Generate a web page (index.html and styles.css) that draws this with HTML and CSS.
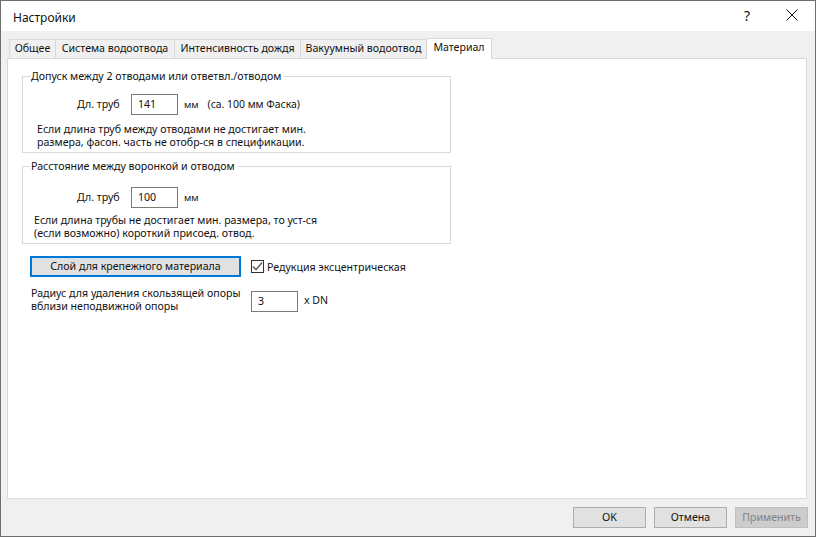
FILE: index.html
```html
<!DOCTYPE html>
<html lang="ru">
<head>
<meta charset="utf-8">
<title>Настройки</title>
<link rel="stylesheet" href="styles.css">
</head>
<body>
<div class="window">
  <header class="titlebar">
    <span class="title">Настройки</span>
    <span class="help">?</span>
    <svg class="close" width="12" height="12" viewBox="0 0 12 12"><path d="M.5.5l11 11M11.500.5l-11 11" stroke="#111" stroke-width="1" fill="none"/></svg>
  </header>
  <main class="body">
    <nav class="tabs">
      <span class="tab t1">Общее</span>
      <span class="tab t2">Система водоотвода</span>
      <span class="tab t3">Интенсивность дождя</span>
      <span class="tab t4">Вакуумный водоотвод</span>
      <span class="tab active">Материал</span>
    </nav>
    <section class="panel">
      <fieldset class="group g1">
        <legend>Допуск между 2 отводами или ответвл./отводом</legend>
        <div class="field">
          <span class="flabel">Дл. труб</span>
          <span class="input">141</span>
          <span class="unit">мм</span>
          <span class="note">(са. 100 мм Фаска)</span>
        </div>
        <p class="desc d1">Если длина труб между отводами не достигает мин.<br>размера, фасон. часть не отобр-ся в спецификации.</p>
      </fieldset>
      <fieldset class="group g2">
        <legend>Расстояние между воронкой и отводом</legend>
        <div class="field">
          <span class="flabel">Дл. труб</span>
          <span class="input">100</span>
          <span class="unit">мм</span>
        </div>
        <p class="desc d2">Если длина трубы не достигает мин. размера, то уст-ся<br>(если возможно) короткий присоед. отвод.</p>
      </fieldset>
      <div class="row-layer">
        <span class="btn layer">Слой для крепежного материала</span>
        <span class="check"><svg width="11" height="11" viewBox="0 0 11 11"><path d="M1 5.500l3 3.200L10 1.500" stroke="#555" stroke-width="1.300" fill="none"/></svg></span>
        <span class="check-label">Редукция эксцентрическая</span>
      </div>
      <div class="row-radius">
        <p class="radius">Радиус для удаления скользящей опоры<br>вблизи неподвижной опоры</p>
        <span class="input">3</span>
        <span class="unit">x DN</span>
      </div>
    </section>
    <footer class="actions">
      <span class="btn act">OK</span>
      <span class="btn act">Отмена</span>
      <span class="btn act disabled">Применить</span>
    </footer>
  </main>
</div>
</body>
</html>
```
FILE: styles.css
```css
* { box-sizing: border-box; }
html, body { margin: 0; height: 100%; }
body { width: 816px; height: 537px; overflow: hidden; background: #fff; font-family: "Noto Sans", "Open Sans", sans-serif; font-size: 10.6px; line-height: 13px; color: #111; }
.window { width: 816px; height: 537px; border: 1px solid #6e6e6e; display: flex; flex-direction: column; background: #f0f0f0; }
.titlebar { height: 30px; flex: none; background: #fff; display: flex; align-items: center; padding: 0 9px 0 12px; }
.title { font-size: 12px; flex: 1; position: relative; top: 1px; }
.help { font-size: 14px; margin-right: 36px; position: relative; top: -1px; }
.close { position: relative; top: -1px; margin-right: 8px; }
.body { flex: 1; display: flex; flex-direction: column; padding: 7px 7px 0 6px; }
.tabs { display: flex; height: 21px; align-items: flex-end; padding-left: 2px; flex: none; margin-bottom: -1px; }
.tab { height: 20px; border: 1px solid #d9d9d9; border-left: 0; border-bottom: 0; background: #f0f0f0; display: flex; align-items: center; justify-content: center; white-space: nowrap; padding-bottom: 2px; }
.t1 { width: 47px; border-left: 1px solid #d9d9d9; }
.t2 { width: 119px; }
.t3 { width: 126px; }
.t4 { width: 126px; }
.active { width: 66px; height: 21px; background: #fff; border: 1px solid #d9d9d9; border-bottom: 0; margin-left: -1px; position: relative; z-index: 1; padding-bottom: 4px; }
.panel { width: 800px; height: 441px; flex: none; background: #fff; border: 1px solid #d9d9d9; padding: 10px 0 0 14px; }
.group { margin: 0; padding: 0; width: 429px; border: 1px solid #d9d9d9; min-width: 0; }
.group legend { padding: 0 3px 0 1px; margin-left: 7px; line-height: 14px; }
.g1 { height: 84px; }
.g2 { height: 85px; margin-top: 6px; }
.field { display: flex; align-items: center; height: 21px; margin-top: 11px; padding-left: 54px; }
.g2 .field { margin-top: 14px; }
.flabel { width: 54px; }
.input { width: 47px; height: 21px; border: 1px solid #7a7a7a; background: #fff; padding: 3px 0 0 6px; flex: none; }
.unit { margin-left: 6px; font-size: 9.500px; }
.note { margin-left: 9px; font-size: 10.400px; }
.desc { margin: 0; }
.d1 { margin: 8px 0 0 14px; }
.d2 { margin: 6px 0 0 11px; }
.row-layer { display: flex; align-items: center; height: 21px; margin: 12px 0 0 8px; }
.btn { display: flex; align-items: center; justify-content: center; background: #e1e1e1; border: 1px solid #adadad; white-space: nowrap; }
.layer { width: 211px; height: 21px; border: 2px solid #0078d7; }
.check { width: 13px; height: 13px; border: 1px solid #333; background: #fff; margin-left: 10px; display: flex; align-items: center; justify-content: center; }
.check-label { margin-left: 3px; padding-top: 1px; }
.row-radius { display: flex; align-items: flex-start; margin: 14px 0 0 9px; }
.radius { margin: -4px 0 0; width: 220px; }
.row-radius .unit { margin-top: 3px; font-size: 10.600px; }
.actions { display: flex; justify-content: flex-end; gap: 8px; margin-top: 8px; }
.act { width: 73px; height: 21px; }
.disabled { background: #ccc; border-color: #bfbfbf; color: #838383; }
```
